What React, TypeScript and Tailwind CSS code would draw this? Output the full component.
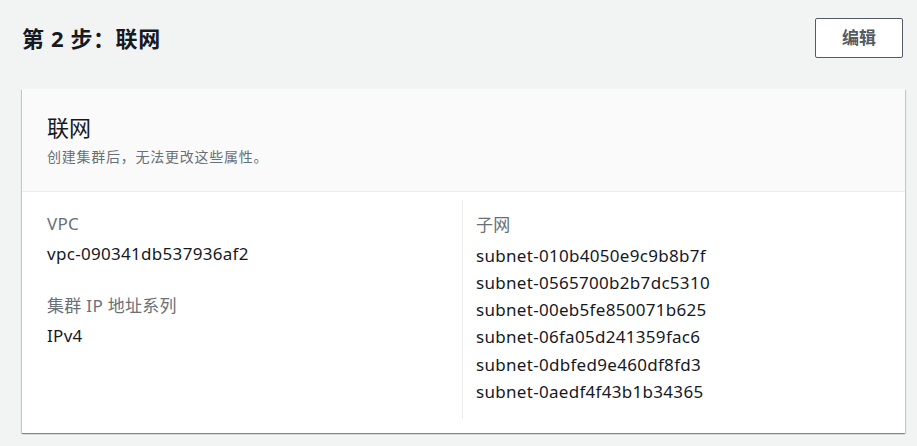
import React from "react";

const subnets = [
  "subnet-010b4050e9c9b8b7f",
  "subnet-0565700b2b7dc5310",
  "subnet-00eb5fe850071b625",
  "subnet-06fa05d241359fac6",
  "subnet-0dbfed9e460df8fd3",
  "subnet-0aedf4f43b1b34365",
];

export default function App() {
  return (
    <div
      className="min-h-screen bg-[#f2f3f3] pl-[22px] pr-[12px] pt-[18px] text-[#16191f]"
      style={{ fontFamily: '"Noto Sans", "Noto Sans CJK SC", sans-serif' }}
    >
      <div className="flex items-center justify-between">
        <h1 className="text-[22px] font-bold leading-[38px] tracking-[0.6px]">第 2 步：联网</h1>
        <button className="mr-[2px] h-[40px] w-[88px] rounded-[2px] border border-[#545b64] bg-white text-[17px] font-bold text-[#545b64]">
          编辑
        </button>
      </div>
      <div className="mt-[31px] bg-white shadow-[0_1px_1px_0_rgba(0,28,36,0.3),1px_1px_1px_0_rgba(0,28,36,0.15),-1px_1px_1px_0_rgba(0,28,36,0.15)]">
        <div className="border-b border-[#eaeded] bg-[#fafafa] px-[25px] pb-[24px] pt-[22px]">
          <h2 className="text-[22px] font-normal leading-[32px]">联网</h2>
          <p className="mt-[4px] text-[14px] leading-[20px] tracking-[0.75px] text-[#687078]">创建集群后，无法更改这些属性。</p>
        </div>
        <div className="grid grid-cols-2 pb-[14px] pl-[25px] pr-[28px] pt-[8px] text-[17px] tracking-[0.3px]">
          <div className="pt-[13px]">
            <div className="leading-[22px] text-[#687078]">VPC</div>
            <div className="mt-[8px] leading-[22px]">vpc-090341db537936af2</div>
            <div className="mt-[30px] leading-[22px] text-[#687078]">集群 IP 地址系列</div>
            <div className="mt-[8px] leading-[22px]">IPv4</div>
          </div>
          <div className="border-l border-[#eaeded] pb-[14px] pl-[13px] pt-[14px]">
            <div className="leading-[22px] text-[#687078]">子网</div>
            <div className="mt-[5.5px] leading-[27.3px]">
              {subnets.map((s) => (
                <div key={s}>{s}</div>
              ))}
            </div>
          </div>
        </div>
      </div>
    </div>
  );
}
